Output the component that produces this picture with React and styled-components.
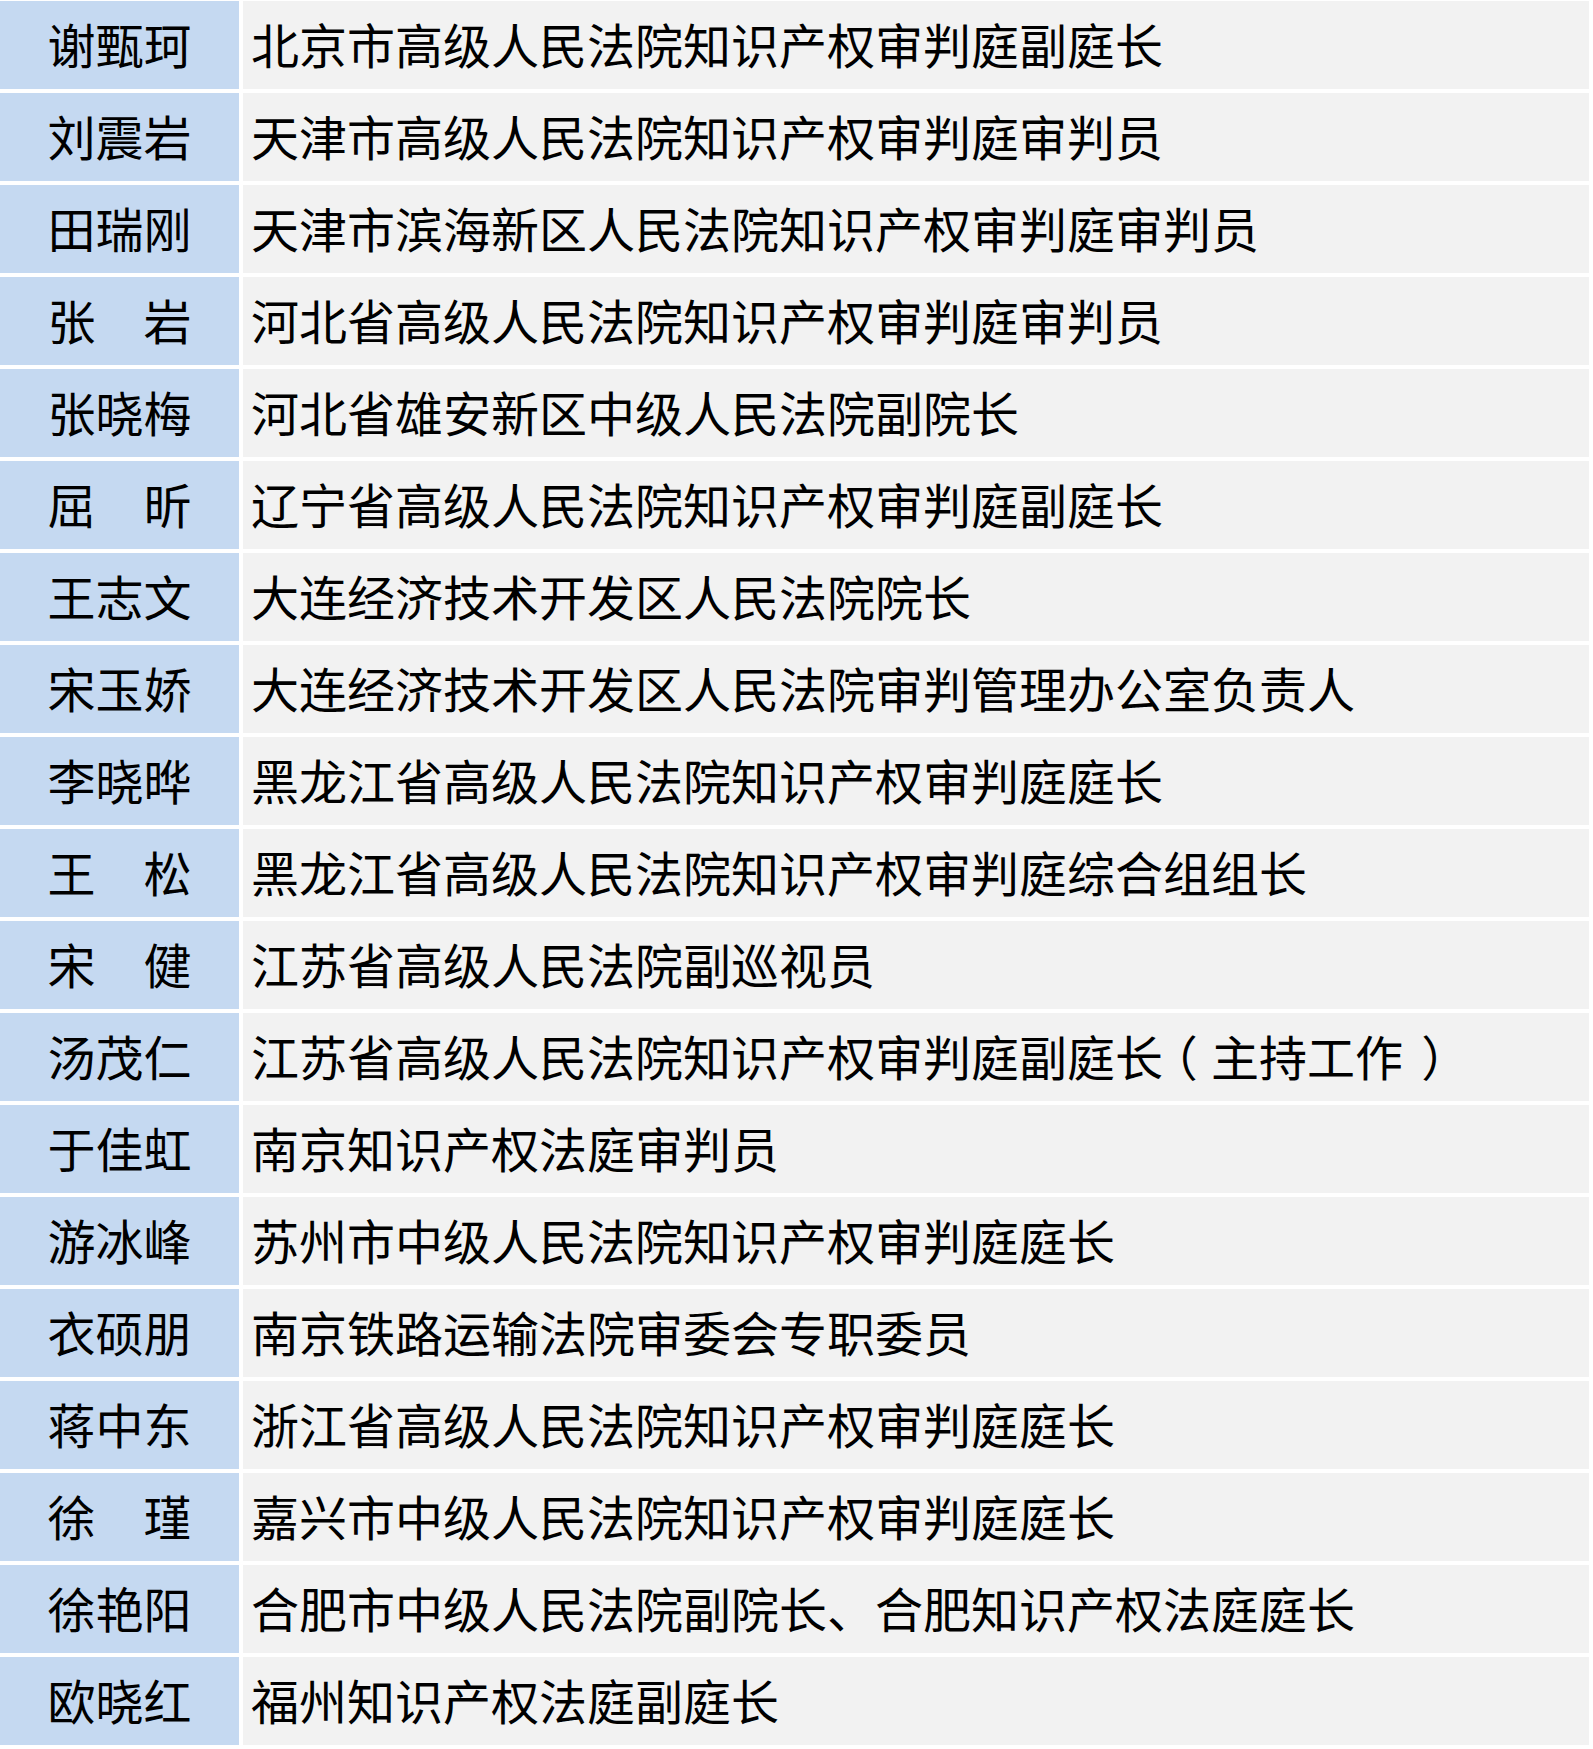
import React from 'react';
import styled, { createGlobalStyle } from 'styled-components';

const GlobalStyle = createGlobalStyle`
    html, body {
        margin: 0;
        padding: 0;
        background: #ffffff;
    }
`;

const Table = styled.div`
    display: grid;
    grid-template-columns: 239px 1346px;
    grid-auto-rows: 88px;
    column-gap: 4px;
    row-gap: 4px;
    padding-top: 1px;
    width: 1589px;
    font-family: "Noto Sans CJK SC", "Noto Sans", sans-serif;
    font-size: 48px;
    color: #000;
`;

const Cell = styled.div`
    display: flex;
    align-items: center;
    justify-content: ${p => (p.$name ? 'center' : 'flex-start')};
    padding: 0 0 4px ${p => (p.$name ? '0' : '8px')};
    background: ${p => (p.$name ? '#c5d9f1' : '#f2f2f2')};
    line-height: 1;
    white-space: nowrap;
`;

// full-width brackets set tight (palt) and spaced so they sit centred, as in the sheet
const Paren = styled.span`
    display: inline-block;
    font-feature-settings: "palt";
    margin: ${p => (p.$close ? '0 9px 0 20px' : '0 15px 0 9px')};
`;

const renderTitle = title =>
    title.split(/([（）])/).map((part, i) => {
        if (part === '（') return <Paren key={i}>（</Paren>;
        if (part === '）') return <Paren key={i} $close>）</Paren>;
        return part;
    });

const rows = [
    ['谢甄珂', '北京市高级人民法院知识产权审判庭副庭长'],
    ['刘震岩', '天津市高级人民法院知识产权审判庭审判员'],
    ['田瑞刚', '天津市滨海新区人民法院知识产权审判庭审判员'],
    ['张　岩', '河北省高级人民法院知识产权审判庭审判员'],
    ['张晓梅', '河北省雄安新区中级人民法院副院长'],
    ['屈　昕', '辽宁省高级人民法院知识产权审判庭副庭长'],
    ['王志文', '大连经济技术开发区人民法院院长'],
    ['宋玉娇', '大连经济技术开发区人民法院审判管理办公室负责人'],
    ['李晓晔', '黑龙江省高级人民法院知识产权审判庭庭长'],
    ['王　松', '黑龙江省高级人民法院知识产权审判庭综合组组长'],
    ['宋　健', '江苏省高级人民法院副巡视员'],
    ['汤茂仁', '江苏省高级人民法院知识产权审判庭副庭长（主持工作）'],
    ['于佳虹', '南京知识产权法庭审判员'],
    ['游冰峰', '苏州市中级人民法院知识产权审判庭庭长'],
    ['衣硕朋', '南京铁路运输法院审委会专职委员'],
    ['蒋中东', '浙江省高级人民法院知识产权审判庭庭长'],
    ['徐　瑾', '嘉兴市中级人民法院知识产权审判庭庭长'],
    ['徐艳阳', '合肥市中级人民法院副院长、合肥知识产权法庭庭长'],
    ['欧晓红', '福州知识产权法庭副庭长'],
];

const App = () => (
    <>
        <GlobalStyle />
        <Table>
            {rows.map(([name, title]) => (
                <React.Fragment key={name + title}>
                    <Cell $name>{name}</Cell>
                    <Cell>{renderTitle(title)}</Cell>
                </React.Fragment>
            ))}
        </Table>
    </>
);

export default App;
